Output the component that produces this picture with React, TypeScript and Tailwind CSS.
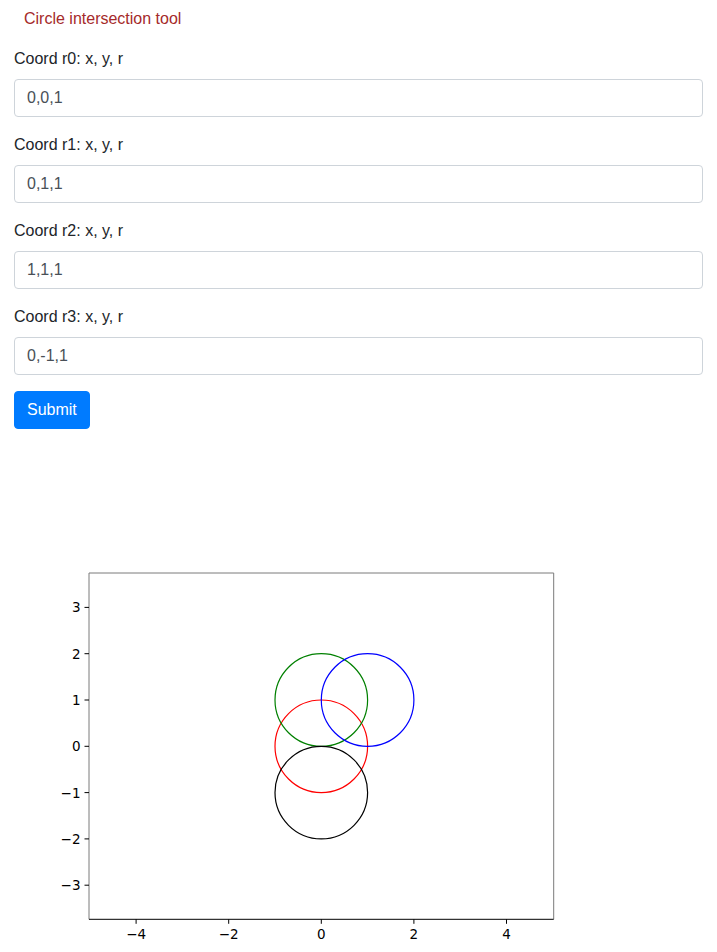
const fields = [
  { label: "Coord r0: x, y, r", value: "0,0,1" },
  { label: "Coord r1: x, y, r", value: "0,1,1" },
  { label: "Coord r2: x, y, r", value: "1,1,1" },
  { label: "Coord r3: x, y, r", value: "0,-1,1" },
];

const circles = [
  { x: 0, y: 0, color: "#ff0000" },
  { x: 0, y: 1, color: "#008000" },
  { x: 1, y: 1, color: "#0000ff" },
  { x: 0, y: -1, color: "#000000" },
];

// plot coords, relative to svg origin
const left = 75;
const right = 539.7;
const top = 55;
const bottom = 401.3;
const cx0 = 307.3;
const cy0 = 228.3;
const unit = 46.3;

function CirclePlot() {
  const xTicks = [-4, -2, 0, 2, 4];
  const yTicks = [-3, -2, -1, 0, 1, 2, 3];
  const fmt = (n: number) => (n < 0 ? `\u2212${-n}` : `${n}`);

  return (
    <svg width={600} height={450} viewBox="0 0 600 450" className="block">
      {circles.map((c, i) => (
        <circle
          key={i}
          cx={cx0 + c.x * unit}
          cy={cy0 - c.y * unit}
          r={unit}
          fill="none"
          stroke={c.color}
          strokeWidth={1.2}
        />
      ))}
      <line x1={left} y1={top} x2={right} y2={top} stroke="#7a7a7a" strokeWidth={1} />
      <line x1={left} y1={top} x2={left} y2={bottom} stroke="#7a7a7a" strokeWidth={1} />
      <line x1={right} y1={top} x2={right} y2={bottom} stroke="#7a7a7a" strokeWidth={1} />
      <line x1={left} y1={bottom} x2={right} y2={bottom} stroke="#000" strokeWidth={1} />
      {xTicks.map((t) => {
        const x = cx0 + t * unit;
        return (
          <g key={t}>
            <line x1={x} y1={bottom} x2={x} y2={bottom + 4.5} stroke="#000" strokeWidth={1} />
            <text
              x={x}
              y={bottom + 20}
              textAnchor="middle"
              fontSize={13.5}
              fontFamily="'DejaVu Sans', sans-serif"
              fill="#000"
            >
              {fmt(t)}
            </text>
          </g>
        );
      })}
      {yTicks.map((t) => {
        const y = cy0 - t * unit;
        return (
          <g key={t}>
            <line x1={left - 4.5} y1={y} x2={left} y2={y} stroke="#000" strokeWidth={1} />
            <text
              x={left - 8.5}
              y={y + 5}
              textAnchor="end"
              fontSize={13.5}
              fontFamily="'DejaVu Sans', sans-serif"
              fill="#000"
            >
              {fmt(t)}
            </text>
          </g>
        );
      })}
    </svg>
  );
}

export default function App() {
  return (
    <div className="min-h-[952px] bg-white font-['Liberation_Sans',Arial,sans-serif] text-base leading-6 text-[#212529]">
      <div className="px-[14px]">
        <div className="pl-[10px] pt-[7px] mb-4 text-[#a52a2a]">Circle intersection tool</div>

        <form onSubmit={(e) => e.preventDefault()}>
          {fields.map((f) => (
            <div key={f.label} className="mb-4">
              <label className="mb-2 block">{f.label}</label>
              <input
                type="text"
                defaultValue={f.value}
                className="block h-[38px] w-full rounded border border-[#ced4da] bg-white px-3 py-1.5 text-base text-[#495057] outline-none"
              />
            </div>
          ))}
          <button
            type="submit"
            className="h-[38px] rounded border border-[#007bff] bg-[#007bff] px-3 text-base text-white"
          >
            Submit
          </button>
        </form>
      </div>

      <div className="mt-[89px] pl-[14px]">
        <CirclePlot />
      </div>
    </div>
  );
}
